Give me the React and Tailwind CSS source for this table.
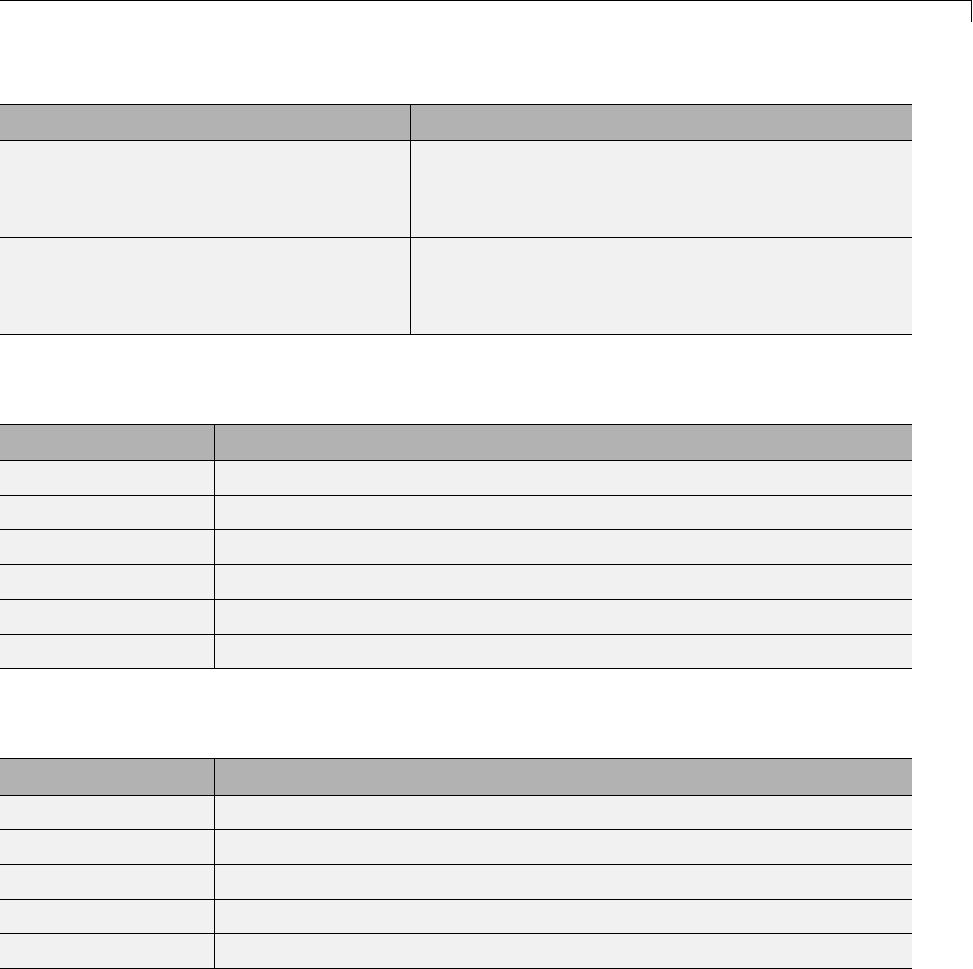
export default function App() {
  const hdr = "bg-[#b2b2b2]";
  const row = "bg-[#f1f1f1]";
  const Row = ({ h, first, bg, top = true }) => (
    <div className={`flex ${top ? "border-t border-black" : ""} ${bg}`}>
      <div className={`${first} ${h}`} />
      <div className={`flex-1 border-l border-black ${h}`} />
    </div>
  );
  return (
    <div className="w-[973px] min-h-[969px] bg-white font-['Liberation_Sans',sans-serif]">
      <div className="w-[972px] h-[22px] border-t border-r border-black" />
      <div className="w-[912px] mt-[82px] border-t border-b border-black">
        <Row h="h-[35px]" first="w-[410px]" bg={hdr} top={false} />
        <Row h="h-[96px]" first="w-[410px]" bg={row} />
        <Row h="h-[96px]" first="w-[410px]" bg={row} />
      </div>
      <div className="w-[912px] mt-[89px] border-t border-b border-black">
        <Row h="h-[35px]" first="w-[214px]" bg={hdr} top={false} />
        <Row h="h-[34px]" first="w-[214px]" bg={row} />
        <Row h="h-[33px]" first="w-[214px]" bg={row} />
        <Row h="h-[34px]" first="w-[214px]" bg={row} />
        <Row h="h-[34px]" first="w-[214px]" bg={row} />
        <Row h="h-[34px]" first="w-[214px]" bg={row} />
        <Row h="h-[33px]" first="w-[214px]" bg={row} />
      </div>
      <div className="w-[912px] mt-[89px] border-t border-b border-black">
        <Row h="h-[36px]" first="w-[214px]" bg={hdr} top={false} />
        <Row h="h-[33px]" first="w-[214px]" bg={row} />
        <Row h="h-[34px]" first="w-[214px]" bg={row} />
        <Row h="h-[34px]" first="w-[214px]" bg={row} />
        <Row h="h-[33px]" first="w-[214px]" bg={row} />
        <Row h="h-[34px]" first="w-[214px]" bg={row} />
      </div>
    </div>
  );
}
